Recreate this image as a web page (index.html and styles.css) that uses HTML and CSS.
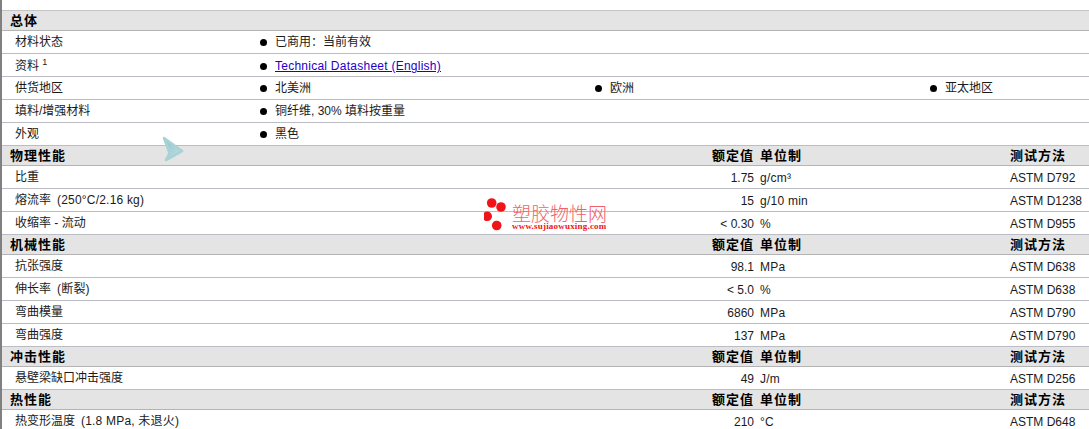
FILE: index.html
```html
<!DOCTYPE html>
<html lang="zh">
<head>
<meta charset="utf-8">
<title>塑胶物性</title>
<link rel="stylesheet" href="styles.css">
</head>
<body>
<main class="sheet">
  <div class="head first"><b class="h-name">总体</b></div>
  <div class="row over"><span class="name">材料状态</span><span class="item">已商用：当前有效</span></div>
  <div class="row over low"><span class="name">资料 <sup>1</sup></span><span class="item"><a href="#">Technical Datasheet (English)</a></span></div>
  <div class="row over"><span class="name">供货地区</span><span class="item">北美洲</span><span class="item">欧洲</span><span class="item">亚太地区</span></div>
  <div class="row over"><span class="name">填料/增强材料</span><span class="item">铜纤维, 30% 填料按重量</span></div>
  <div class="row over"><span class="name">外观</span><span class="item">黑色</span></div>

  <div class="head data"><b class="h-name">物理性能</b><b class="h-val">额定值</b><b class="h-unit">单位制</b><b>测试方法</b></div>
  <div class="row data"><span class="name">比重</span><span class="val">1.75</span><span class="unit">g/cm³</span><span class="test">ASTM D792</span></div>
  <div class="row data"><span class="name">熔流率<span class="qual">(250°C/2.16 kg)</span></span><span class="val">15</span><span class="unit">g/10 min</span><span class="test">ASTM D1238</span></div>
  <div class="row data"><span class="name">收缩率 - 流动</span><span class="val">&lt; 0.30</span><span class="unit">%</span><span class="test">ASTM D955</span></div>

  <div class="head data"><b class="h-name">机械性能</b><b class="h-val">额定值</b><b class="h-unit">单位制</b><b>测试方法</b></div>
  <div class="row data"><span class="name">抗张强度</span><span class="val">98.1</span><span class="unit">MPa</span><span class="test">ASTM D638</span></div>
  <div class="row data"><span class="name">伸长率<span class="qual">(断裂)</span></span><span class="val">&lt; 5.0</span><span class="unit">%</span><span class="test">ASTM D638</span></div>
  <div class="row data"><span class="name">弯曲模量</span><span class="val">6860</span><span class="unit">MPa</span><span class="test">ASTM D790</span></div>
  <div class="row data"><span class="name">弯曲强度</span><span class="val">137</span><span class="unit">MPa</span><span class="test">ASTM D790</span></div>

  <div class="head data"><b class="h-name">冲击性能</b><b class="h-val">额定值</b><b class="h-unit">单位制</b><b>测试方法</b></div>
  <div class="row data"><span class="name">悬壁梁缺口冲击强度</span><span class="val">49</span><span class="unit">J/m</span><span class="test">ASTM D256</span></div>

  <div class="head data"><b class="h-name">热性能</b><b class="h-val">额定值</b><b class="h-unit">单位制</b><b>测试方法</b></div>
  <div class="row data"><span class="name">热变形温度<span class="qual">(1.8 MPa, 未退火)</span></span><span class="val">210</span><span class="unit">°C</span><span class="test">ASTM D648</span></div>
</main>

<svg class="cursor" width="26" height="30" viewBox="0 0 26 30" aria-hidden="true">
  <defs>
    <linearGradient id="cursor-fill" x1="0" y1="0" x2="1" y2="1">
      <stop offset="0" stop-color="#8ec4ca"/>
      <stop offset="1" stop-color="#c6e1e3"/>
    </linearGradient>
  </defs>
  <path d="M4 3 L22 16 L6 25 L9.5 18 Z" fill="url(#cursor-fill)" stroke="#a9d2d6" stroke-width="2.6" stroke-linejoin="round"/>
</svg>

<div class="mark">
  <svg class="mark-dots" width="26" height="34" viewBox="0 0 26 34" aria-hidden="true">
    <circle cx="7.7" cy="6" r="4.8"/>
    <circle cx="17" cy="10" r="4.8"/>
    <circle cx="3.2" cy="19.3" r="4.8"/>
    <circle cx="12.7" cy="28.5" r="4.8"/>
  </svg>
  <div class="mark-text">
    <div class="mark-cn">塑胶物性网</div>
    <div class="mark-url">www.sujiaowuxing.com</div>
  </div>
</div>
</body>
</html>
```
FILE: styles.css
```css
html, body {
  margin: 0;
  padding: 0;
  background: #fff;
}
body {
  position: relative;
  width: 1089px;
  height: 429px;
  overflow: hidden;
  font: 12px/1 "Liberation Sans", "Noto Sans CJK SC", sans-serif;
  color: #1a1a1a;
}
.sheet {
  box-sizing: border-box;
  height: 429px;
  padding-top: 10px;
  border-left: 2px solid #808080;
}
.head {
  box-sizing: border-box;
  display: grid;
  align-items: center;
  height: 20px;
  padding-left: 8px;
  border-bottom: 1px solid #b4b4b4;
  background: #e4e4e4;
  color: #000;
  font-size: 13px;
}
.head.first {
  height: 21px;
  border-top: 1px solid #c4c4c4;
}
.head b {
  letter-spacing: 1px;
  font-weight: 700;
}
.row {
  box-sizing: border-box;
  display: grid;
  align-items: center;
  height: 23px;
  padding-left: 13px;
  border-bottom: 1px solid #bcbcc4;
}
.row.low {
  padding-top: 2px;
}
.over {
  grid-template-columns: 245px 335px 335px 159px;
}
.row.data {
  grid-template-columns: 637px 102px 256px 79px;
}
.head.data {
  grid-template-columns: 642px 102px 256px 79px;
}
.val,
.h-val {
  text-align: right;
}
.unit,
.h-unit {
  padding-left: 6px;
}
.val,
.unit,
.test {
  padding-top: 2px;
}
.unit {
  letter-spacing: 0.25px;
}
.qual {
  padding-left: 6px;
  letter-spacing: 0.2px;
}
.item {
  position: relative;
  padding-left: 15px;
}
.item::before {
  content: "";
  position: absolute;
  left: 0;
  top: 50%;
  width: 7px;
  height: 7px;
  margin-top: -3.5px;
  border-radius: 50%;
  background: #000;
}
.item a {
  color: #2200cc;
  text-decoration: underline;
  letter-spacing: 0.25px;
}
sup {
  font-size: 9px;
  line-height: 0;
}
.cursor {
  position: absolute;
  left: 160px;
  top: 135px;
}
.mark {
  position: absolute;
  left: 484px;
  top: 197px;
  display: flex;
  gap: 2px;
}
.mark-dots {
  fill: #f01418;
}
.mark-text {
  display: flex;
  flex-direction: column;
  padding-top: 6px;
}
.mark-cn {
  font: 300 19px/19px "Noto Sans CJK SC", sans-serif;
  color: #f0626a;
  white-space: nowrap;
}
.mark-url {
  font: 700 9px/9px "Liberation Serif", serif;
  letter-spacing: 0.2px;
  color: #f01418;
  white-space: nowrap;
}
```
